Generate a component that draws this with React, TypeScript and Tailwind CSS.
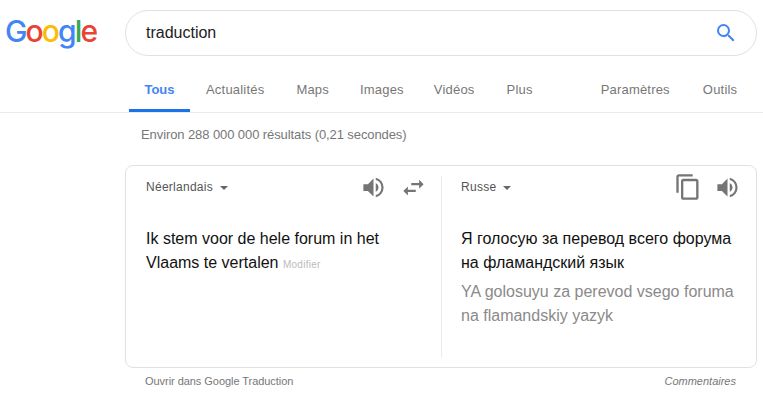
const sans = "font-['Liberation_Sans',Arial,sans-serif]";

function Speaker({ className }: { className: string }) {
  return (
    <svg viewBox="0 0 24 24" className={className} fill="#757575">
      <path d="M3 9v6h4l5 5V4L7 9H3zm13.5 3A4.5 4.5 0 0 0 14 7.97v8.05A4.5 4.5 0 0 0 16.5 12z" />
      <path d="M14 3.23v2.06a7 7 0 0 1 0 13.42v2.06a9 9 0 0 0 0-17.54z" />
    </svg>
  );
}

function Caret() {
  return <span className="ml-[7px] mt-[1px] w-0 h-0 border-x-[4.5px] border-x-transparent border-t-[4.5px] border-t-[#666]" />;
}

function Tab({ label, className = "" }: { label: string; className?: string }) {
  return <span className={`text-[13px] tracking-[0.2px] text-[#777] ${className}`}>{label}</span>;
}

export default function App() {
  return (
    <div className={`w-[763px] h-[401px] bg-white overflow-hidden ${sans}`}>
      <header className="h-[113px] border-b border-[#ebebeb]">
        <div className="flex pt-[10px] h-[65px]">
          <div className="w-[125px] pl-[5px] font-['Inter',sans-serif] text-[30px] leading-[42px] font-medium tracking-[-1.9px] select-none">
            <span className="text-[#4285f4]">G</span>
            <span className="text-[#ea4335]">o</span>
            <span className="text-[#fbbc05]">o</span>
            <span className="text-[#4285f4]">g</span>
            <span className="text-[#34a853]">l</span>
            <span className="text-[#ea4335]">e</span>
          </div>
          <div className="w-[632px] h-[46px] rounded-full border border-[#dfe1e5] flex items-center pl-[20px] pr-[18px] justify-between">
            <span className="text-[16px] text-[#222]">traduction</span>
            <svg viewBox="0 0 24 24" className="w-[24px] h-[24px]" fill="#4285f4">
              <path d="M15.5 14h-.79l-.28-.27A6.47 6.47 0 0 0 16 9.5 6.5 6.5 0 1 0 9.5 16c1.61 0 3.09-.59 4.23-1.57l.27.28v.79l5 4.99L20.49 19l-4.99-5zm-6 0C7.01 14 5 11.99 5 9.5S7.01 5 9.5 5 14 7.01 14 9.5 11.99 14 9.5 14z" />
            </svg>
          </div>
        </div>
        <nav className="flex pl-[129px] h-[47px]">
          <div className="w-[61px] h-[47px] flex justify-center border-b-[3px] border-[#1a73e8] pt-[17px]">
            <span className="text-[13px] font-bold text-[#4285f4] leading-[15px]">Tous</span>
          </div>
          <div className="flex flex-1 pt-[17px] leading-[15px]">
            <Tab label="Actualités" className="ml-[16px]" />
            <Tab label="Maps" className="ml-[32px]" />
            <Tab label="Images" className="ml-[31px]" />
            <Tab label="Vidéos" className="ml-[30px]" />
            <Tab label="Plus" className="ml-[32px]" />
            <Tab label="Paramètres" className="ml-[68px]" />
            <Tab label="Outils" className="ml-[33px]" />
          </div>
        </nav>
      </header>

      <p className="pl-[141px] pt-[14px] h-[52px] text-[13px] tracking-[-0.09px] leading-[15px] text-[#777]">
        Environ 288 000 000 résultats (0,21 secondes)
      </p>

      <section className="ml-[125px] w-[632px] h-[203px] rounded-[8px] border border-[#dfe1e5] flex pt-[10px] pb-[9px]">
        <div className="w-[316px] border-r border-[#ebebeb] pl-[20px] pr-[14px]">
          <div className="flex items-center h-[22px]">
            <span className="text-[12px] tracking-[0.27px] text-[#555]">Néerlandais</span>
            <Caret />
            <Speaker className="w-[27px] h-[27px] ml-auto" />
            <svg viewBox="0 0 24 24" className="w-[27px] h-[27px] ml-[13px]" fill="#757575">
              <path d="M6.99 11 3 15l3.99 4v-3H14v-2H6.99v-3zM21 9l-3.99-4v3H10v2h7.01v3L21 9z" />
            </svg>
          </div>
          <p className="mt-[29px] text-[16px] leading-[24px] text-[#111]">
            Ik stem voor de hele forum in het Vlaams te vertalen{" "}
            <span className="text-[10px] tracking-[0.25px] text-[#bbb]">Modifier</span>
          </p>
        </div>
        <div className="flex-1 pl-[19px] pr-[15px]">
          <div className="flex items-center h-[22px]">
            <span className="text-[12px] tracking-[0.27px] text-[#555]">Russe</span>
            <Caret />
            <svg viewBox="0 0 24 24" className="w-[28px] h-[28px] ml-auto" fill="#757575">
              <path d="M16 1H4c-1.1 0-2 .9-2 2v14h2V3h12V1zm3 4H8c-1.1 0-2 .9-2 2v14c0 1.1.9 2 2 2h11c1.1 0 2-.9 2-2V7c0-1.1-.9-2-2-2zm0 16H8V7h11v14z" />
            </svg>
            <Speaker className="w-[27px] h-[27px] ml-[12px]" />
          </div>
          <p className="mt-[29px] text-[16px] leading-[24px] text-[#111]">
            Я голосую за перевод всего форума на фламандский язык
          </p>
          <p className="mt-[5px] text-[16px] leading-[24px] text-[#8a8a8a]">
            YA golosuyu za perevod vsego foruma na flamandskiy yazyk
          </p>
        </div>
      </section>

      <footer className="flex justify-between pl-[145px] pr-[27px] pt-[7px] text-[11px] leading-[13px] text-[#777]">
        <span className="tracking-[-0.05px]">Ouvrir dans Google Traduction</span>
        <span className="italic">Commentaires</span>
      </footer>
    </div>
  );
}
